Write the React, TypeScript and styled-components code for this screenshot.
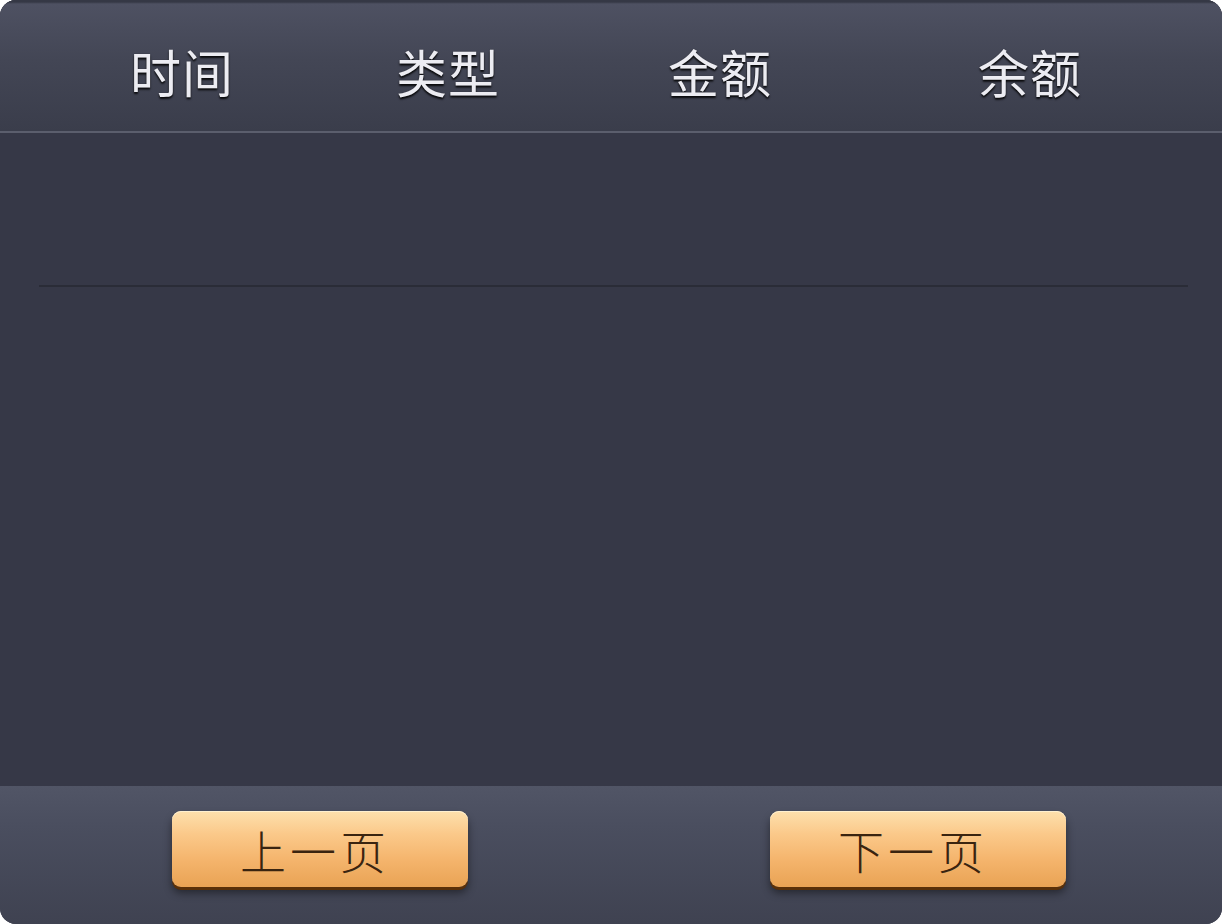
import React from "react";
import styled, { createGlobalStyle } from "styled-components";

const Global = createGlobalStyle`
  html, body { margin: 0; padding: 0; background: #ffffff; }
  body { font-family: "Noto Sans CJK SC", "Noto Sans", sans-serif; }
`;

const Panel = styled.div`
  width: 1222px;
  height: 924px;
  border-radius: 16px;
  overflow: hidden;
  display: flex;
  flex-direction: column;
  background: #363847;
  box-shadow: inset 0 3px 0 #363846, inset 4px 0 0 rgba(255,255,255,0.05), inset -4px 0 0 rgba(255,255,255,0.05);
  position: relative;
`;

const Header = styled.div`
  height: 131px;
  flex: none;
  display: grid;
  grid-template-columns: 364px 168px 376px 244px 70px;
  align-items: center;
  background: linear-gradient(to bottom, #353845 0px, #353845 2px, #4e5162 4px, #434655 60px, #3a3d4b 131px);
  border-bottom: 2px solid #5b5e6d;
`;

const HeadCell = styled.div`
  text-align: center;
  font-size: 51px;
  line-height: 1;
  letter-spacing: 1px;
  color: #ececf2;
  padding-top: 12px;
  text-shadow: 0 2px 2px rgba(0,0,0,0.85), 0 0 1px rgba(0,0,0,0.6);
`;

const Body = styled.div`
  flex: 1;
  display: flex;
  flex-direction: column;
  padding: 0 34px 0 39px;
  background: #363847;
`;

const Row = styled.div`
  height: 152px;
  border-bottom: 2px solid #2a2c37;
`;

const Footer = styled.div`
  height: 138px;
  flex: none;
  display: flex;
  align-items: flex-start;
  padding-top: 25px;
  box-sizing: border-box;
  gap: 302px;
  padding-left: 172px;
  background: linear-gradient(to bottom, #515566 0px, #4a4e5f 40px, #3f4251 138px);
`;

const PageButton = styled.button`
  width: 296px;
  height: 76px;
  border: none;
  border-radius: 9px;
  padding: 0 10px 0 0;
  cursor: pointer;
  font-family: "Noto Sans CJK SC", sans-serif;
  font-size: 46px;
  font-weight: 300;
  letter-spacing: 4px;
  line-height: 1;
  color: #3a2410;
  background: linear-gradient(to bottom, #fde0ad 0%, #fbc98a 30%, #f4b46c 65%, #e9a354 100%);
  box-shadow: inset 0 1px 0 #fff0d0, 0 3px 0 #5a3008, 0 6px 8px rgba(0,0,0,0.45);
  display: flex;
  align-items: center;
  justify-content: center;
`;

export default function App() {
  return (
    <>
      <Global />
      <Panel>
        <Header>
          <HeadCell>时间</HeadCell>
          <HeadCell>类型</HeadCell>
          <HeadCell>金额</HeadCell>
          <HeadCell>余额</HeadCell>
          <div />
        </Header>
        <Body>
          <Row />
        </Body>
        <Footer>
          <PageButton>上一页</PageButton>
          <PageButton>下一页</PageButton>
        </Footer>
      </Panel>
    </>
  );
}
